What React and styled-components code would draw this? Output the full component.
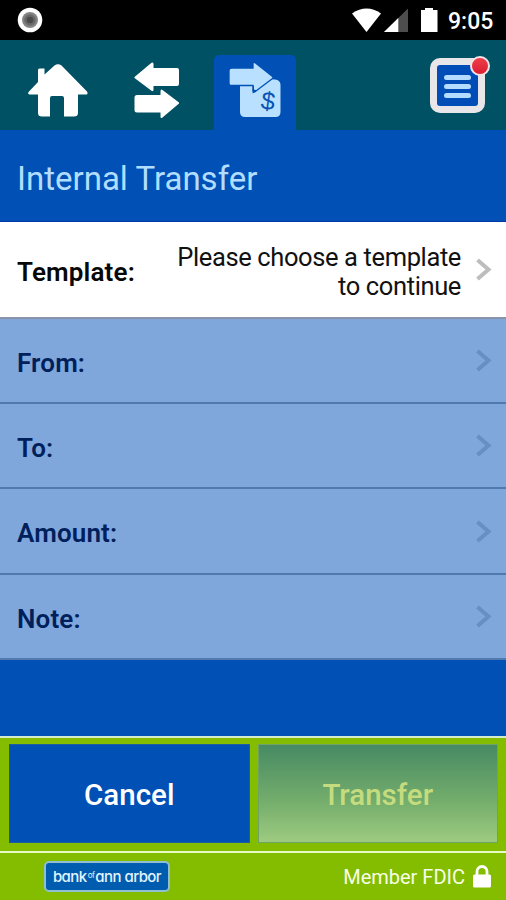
import styled, { createGlobalStyle } from 'styled-components';

const GlobalStyle = createGlobalStyle`
  * {
    box-sizing: border-box;
  }

  body {
    margin: 0;
    font-family: Roboto, 'Liberation Sans', sans-serif;
  }
`;

const Screen = styled.div`
  display: flex;
  flex-direction: column;
  width: 506px;
  height: 900px;
  background: #0050b5;
  overflow: hidden;
`;

const StatusBar = styled.div`
  display: flex;
  align-items: center;
  justify-content: space-between;
  height: 40px;
  padding: 0 12px 0 17px;
  background: #000;
`;

const StatusIcons = styled.div`
  display: flex;
  align-items: center;
`;

const Clock = styled.span`
  width: 46px;
  margin-left: 10px;
  padding-top: 3px;
  color: #fff;
  font-size: 23px;
  font-weight: 500;
  line-height: 37px;
  white-space: nowrap;
`;

const NavBar = styled.nav`
  display: flex;
  align-items: flex-end;
  height: 90px;
  background: #005163;
`;

const NavTab = styled.button`
  display: flex;
  align-items: center;
  justify-content: center;
  width: ${(props) => props.$width}px;
  height: 75px;
  margin-right: ${(props) => props.$gap || 0}px;
  padding: 0 0 ${(props) => (props.$active ? 6 : 4)}px;
  border: none;
  border-radius: 5px 5px 0 0;
  background: ${(props) => (props.$active ? '#0050b5' : 'transparent')};
  cursor: pointer;
`;

const MenuButton = styled.button`
  position: relative;
  display: flex;
  flex-direction: column;
  align-items: center;
  justify-content: center;
  gap: 4px;
  width: 55px;
  height: 55px;
  margin: 0 21px 17px auto;
  padding: 1px 0 0;
  border: 7px solid #e8e6e8;
  border-radius: 10px;
  background: #004db8;
`;

const MenuLine = styled.span`
  width: 27px;
  height: 5px;
  border-radius: 2.5px;
  background: #b4dcff;
`;

const MenuBadge = styled.span`
  position: absolute;
  top: -9px;
  right: -12px;
  width: 20px;
  height: 20px;
  border: 2px solid #f3e4e8;
  border-radius: 50%;
  background: linear-gradient(#ef3d4a, #db1f30);
`;

const Title = styled.h1`
  height: 92px;
  margin: 0;
  padding: 3px 0 0 17px;
  border-bottom: 1px solid #0038a4;
  color: #b2ddff;
  font-size: 33px;
  font-weight: 400;
  line-height: 91px;
`;

const Row = styled.div`
  display: flex;
  align-items: center;
  height: ${(props) => props.$height || 85}px;
  padding: 1px 14px 0 17px;
  border-bottom: 2px solid ${(props) => (props.$disabled ? '#5079b0' : '#8b93a8')};
  background: ${(props) => (props.$disabled ? '#80a7db' : '#fff')};
  color: ${(props) => (props.$disabled ? '#00205c' : '#080808')};
`;

const RowLabel = styled.span`
  padding-top: 3px;
  font-size: 26px;
  font-weight: 600;
  letter-spacing: 0.15px;
`;

const RowValue = styled.span`
  width: 300px;
  margin-left: auto;
  padding-top: 4px;
  color: #111;
  font-size: 25.5px;
  letter-spacing: -0.38px;
  line-height: 29px;
  text-align: right;
`;

const RowArrow = styled.svg`
  flex: none;
  margin-left: ${(props) => (props.$afterValue ? '14px' : 'auto')};
`;

const Actions = styled.div`
  display: flex;
  gap: 8px;
  height: 117px;
  margin-top: auto;
  padding: 6px 8px 9px 9px;
  border-top: 2px solid #d5eccb;
  border-bottom: 2px solid #e8fbc4;
  background: #84bd00;
`;

const ActionButton = styled.button`
  flex: 1;
  height: 99px;
  padding: 2px 0 0;
  border: 1px solid ${(props) => (props.$disabled ? '#6da466' : '#1d5da0')};
  background: ${(props) =>
    props.$disabled ? 'linear-gradient(#478a63, #74ad6c 58%, #9dcb80)' : '#0050b5'};
  color: ${(props) => (props.$disabled ? '#c5dc7e' : '#fff')};
  font-family: inherit;
  font-size: 29.5px;
  font-weight: 500;
`;

const Footer = styled.footer`
  display: flex;
  align-items: center;
  justify-content: space-between;
  height: 47px;
  padding: 0 15px 0 44px;
  background: #84bd00;
`;

const BankLogo = styled.div`
  display: flex;
  align-items: center;
  justify-content: center;
  width: 126px;
  height: 31px;
  border: 2px solid #8fbfd0;
  border-radius: 5px;
  background: #005cae;
  color: #e3f5ff;
  font-family: Inter, sans-serif;
  font-feature-settings: 'cv11';
  font-size: 15px;
  font-weight: 500;
  letter-spacing: -0.55px;
  white-space: nowrap;
`;

const LogoOf = styled.span`
  margin: 0 1px 4px;
  font-size: 8px;
  font-weight: 400;
`;

const Member = styled.div`
  display: flex;
  align-items: center;
  gap: 8px;
  color: #f7ffe8;
  font-size: 20px;
  white-space: nowrap;
`;

const RecordIcon = () => (
  <svg width="26" height="26" viewBox="0 0 26 26">
    <circle cx="13" cy="13" r="12.3" fill="#fff" />
    <circle cx="13" cy="13" r="8" fill="#858585" />
    <circle cx="13" cy="13" r="5.8" fill="#696969" />
    <circle cx="13" cy="13" r="3.2" fill="#4b4b4b" />
  </svg>
);

// wifi, signal and battery share one canvas
const PhoneStatusIcon = () => (
  <svg width="86" height="26" viewBox="0 0 86 26">
    <path d="M0 6.5Q14.5-3.5 29 6.5L14.5 25Z" fill="#fff" />
    <path d="M56 1.5V25H32Z" fill="#4d4d4d" />
    <path d="M46.3 11V25H32Z" fill="#fff" />
    <path d="M69 3h4V1h8v2h4.500v22H69Z" fill="#fff" />
  </svg>
);

const HomeIcon = () => (
  <svg width="60" height="54" viewBox="0 0 60 54">
    <path
      d="M10 18V6Q10 4.500 11.500 4.500H16.500V10.500L26.500 1.500Q30 -1 33.500 1.500L59 27.500Q60.500 30.500 58 30.500H50V49Q50 52.500 46 52.500H36V34Q36 32 34 32H24Q22 32 22 34V52.500H14Q10 52.500 10 49V30.500H1.500Q-1 30 1 27.500Z"
      fill="#fff"
    />
  </svg>
);

const SwapIcon = () => (
  <svg width="46" height="57" viewBox="0 0 46 57">
    <path
      d="M.5 15 17.500.8Q19.500-.2 19.500 2V6H43Q45 6 45 8V22Q45 24 43 24H19.500V27.500Q19.500 30 17.500 28.800L.5 16Z"
      fill="#fff"
    />
    <path
      d="M45 41.500 28.500 55.500Q26.500 57 26.500 54.500V50.500H3Q.5 50.500.5 48V35.500Q.5 33 3 33H26.500V29.500Q26.500 26.500 28.500 28L45 40.500Z"
      fill="#fff"
    />
  </svg>
);

const TemplateIcon = () => (
  <svg width="52" height="56" viewBox="0 0 52 56">
    <path d="M11 17H40L46 17.500Q51.500 18 51.500 23V50Q51.500 55 46.500 55H16Q11 55 11 50V17Z" fill="#b9e0ff" />
    <path
      d="M2.500 6H24V2Q24-.5 26.500 1L43.500 14.500Q44.500 15.500 43.500 16.500L26 29.800Q24 31 24 28.500V23.500H2.500Q0 23.500 0 21V8.500Q0 6 2.500 6Z"
      fill="#b9e0ff"
      stroke="#0050b5"
      strokeWidth="1.300"
    />
    <path d="M23.700 24V31.500L28 28.500 25 27.500V24Z" fill="#0050b5" />
    <text x="32" y="47.500" transform="rotate(8 39 40)" fill="#0754b5" fontFamily="Liberation Sans, sans-serif" fontSize="25">
      $
    </text>
  </svg>
);

const LockIcon = () => (
  <svg width="18" height="23" viewBox="0 0 18 23">
    <path d="M4 11V6.500a5 5 0 0 1 10 0V11" fill="none" stroke="#fff" strokeWidth="2.800" />
    <rect y="9.500" width="18" height="13" rx="1.500" fill="#fff" />
  </svg>
);

const Chevron = ({ disabled, afterValue }) => (
  <RowArrow width="17" height="24" viewBox="0 0 17 24" $afterValue={afterValue}>
    <path d="M2.500 2 13.500 11.500 2.500 21" fill="none" stroke={disabled ? '#658fc5' : '#bdbdbd'} strokeWidth="4" />
  </RowArrow>
);

const fields = [
  { label: 'From:', height: 85 },
  { label: 'To:', height: 85 },
  { label: 'Amount:', height: 86 },
  { label: 'Note:', height: 85 },
];

const App = () => {
  return (
    <Screen>
      <GlobalStyle />
      <StatusBar>
        <RecordIcon />
        <StatusIcons>
          <PhoneStatusIcon />
          <Clock>9:05</Clock>
        </StatusIcons>
      </StatusBar>
      <NavBar>
        <NavTab $width={116} aria-label="Home">
          <HomeIcon />
        </NavTab>
        <NavTab $width={82} $gap={16} aria-label="Transfers">
          <SwapIcon />
        </NavTab>
        <NavTab $width={82} $active aria-label="Internal transfer">
          <TemplateIcon />
        </NavTab>
        <MenuButton aria-label="Menu">
          <MenuLine />
          <MenuLine />
          <MenuLine />
          <MenuBadge />
        </MenuButton>
      </NavBar>
      <Title>Internal Transfer</Title>
      <Row $height={97}>
        <RowLabel>Template:</RowLabel>
        <RowValue>
          Please choose a template
          <br />
          to continue
        </RowValue>
        <Chevron afterValue />
      </Row>
      {fields.map((field) => (
        <Row key={field.label} $height={field.height} $disabled>
          <RowLabel>{field.label}</RowLabel>
          <Chevron disabled />
        </Row>
      ))}
      <Actions>
        <ActionButton>Cancel</ActionButton>
        <ActionButton $disabled>Transfer</ActionButton>
      </Actions>
      <Footer>
        <BankLogo>
          bank<LogoOf>of</LogoOf>ann arbor
        </BankLogo>
        <Member>
          Member FDIC
          <LockIcon />
        </Member>
      </Footer>
    </Screen>
  );
};

export default App;
